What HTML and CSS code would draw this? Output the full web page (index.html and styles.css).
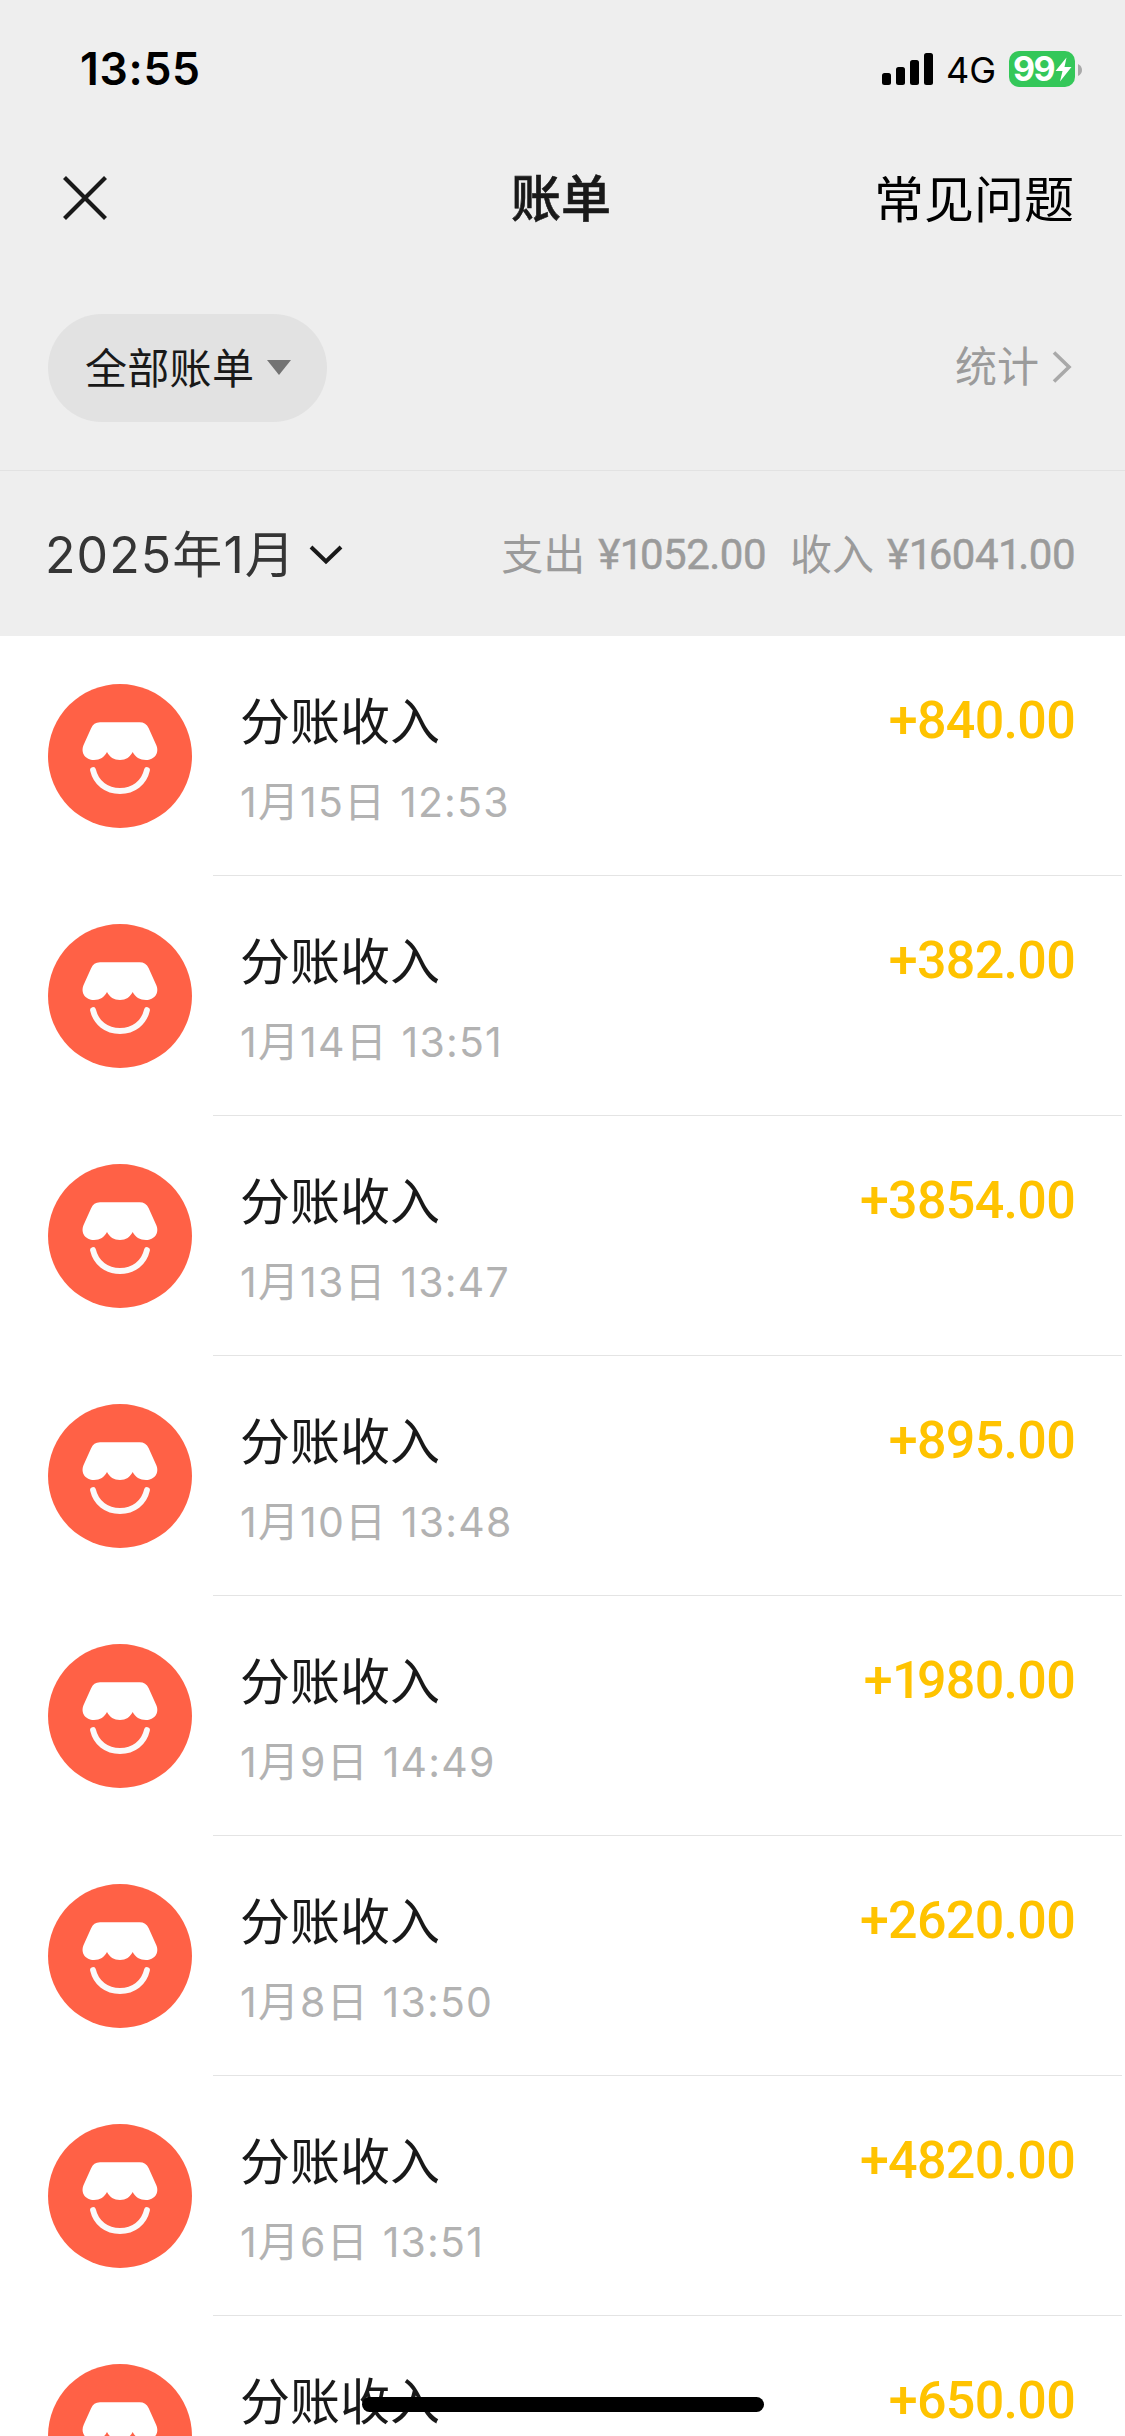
FILE: index.html
```
<!DOCTYPE html>
<html lang="zh-CN">
<head>
<meta charset="utf-8">
<title>账单</title>
<link rel="stylesheet" href="styles.css">
</head>
<body>
<svg class="defs" width="0" height="0" aria-hidden="true">
  <symbol id="shop" viewBox="0 0 144 144">
    <circle cx="72" cy="72" r="72" fill="#ff6146"/>
    <path fill="#fff" d="M52 38.300H91.500Q98 38.300 100.600 44L108 60.500C112 69 106.500 76 98 76C92 76 87 73 84.700 68C82 73 78 76 72 76C66 76 61.500 73 59 68C56.500 73 52 76 46 76C37.500 76 32 69 35.800 60.500L43 44.500Q45.500 38.300 52 38.300Z"/>
    <path fill="none" stroke="#fafafa" stroke-width="5.800" stroke-linecap="round" d="M45 86C48 99 58.500 107 72 107S96 99 99 86"/>
  </symbol>
</svg>
<div class="page">
  <header class="top">
    <div class="status">
      <span class="clock">13:55</span>
      <div class="indicators">
        <svg class="signal" width="52" height="32" viewBox="0 0 52 32"><rect x="0" y="20" width="9" height="12" rx="2.500"/><rect x="14" y="14" width="9" height="18" rx="2.500"/><rect x="28" y="7" width="9" height="25" rx="2.500"/><rect x="42" y="0" width="9" height="32" rx="2.500"/></svg>
        <span class="network">4G</span>
        <div class="battery">
          <span class="level">99</span>
          <svg width="17" height="25" viewBox="0 0 17 25"><path fill="#fff" d="M11.500 0.500L0.500 14H7.500L5 24.500L16.500 10H9.500Z"/></svg>
        </div>
        <svg class="nub" width="4" height="12" viewBox="0 0 4 12"><path fill="#a9a9a9" d="M0 0Q4 2 4 6T0 12Z"/></svg>
      </div>
    </div>
    <nav class="nav">
      <svg class="close" width="44" height="44" viewBox="0 0 44 44"><path fill="none" stroke="#191919" stroke-width="4.200" d="M1.500 1.500L42.500 42.500M42.500 1.500L1.500 42.500"/></svg>
      <h1 class="title">账单</h1>
      <span class="faq">常见问题</span>
    </nav>
    <div class="filters">
      <div class="pill"><span class="scope">全部账单</span><svg width="24" height="15" viewBox="0 0 24 15"><path fill="#737373" d="M0 0H24L12 15Z"/></svg></div>
      <div class="stats"><span>统计</span><svg width="20" height="32" viewBox="0 0 20 32"><path fill="none" stroke="#a9a9a9" stroke-width="3.600" d="M2 1.500L17 16L2 30.500"/></svg></div>
    </div>
    <div class="month">
      <div class="picker"><span>2025年1月</span><svg width="34" height="20" viewBox="0 0 34 20"><path fill="none" stroke="#191919" stroke-width="4" d="M2 2L17 16.500L32 2"/></svg></div>
      <div class="totals"><span class="label">支出</span><span class="sum">¥<span class="one">1</span>052.00</span><span class="label income">收入</span><span class="sum">¥<span class="one">1</span>604<span class="one">1</span>.00</span></div>
    </div>
  </header>
  <main class="list">
    <div class="row"><svg class="avatar"><use href="#shop"/></svg><div class="entry"><div class="info"><span class="name">分账收入</span><span class="date">1月15日 12:53</span></div><span class="amount">+840.00</span></div></div>
    <div class="row"><svg class="avatar"><use href="#shop"/></svg><div class="entry"><div class="info"><span class="name">分账收入</span><span class="date">1月14日 13:51</span></div><span class="amount">+382.00</span></div></div>
    <div class="row"><svg class="avatar"><use href="#shop"/></svg><div class="entry"><div class="info"><span class="name">分账收入</span><span class="date">1月13日 13:47</span></div><span class="amount">+3854.00</span></div></div>
    <div class="row"><svg class="avatar"><use href="#shop"/></svg><div class="entry"><div class="info"><span class="name">分账收入</span><span class="date">1月10日 13:48</span></div><span class="amount">+895.00</span></div></div>
    <div class="row"><svg class="avatar"><use href="#shop"/></svg><div class="entry"><div class="info"><span class="name">分账收入</span><span class="date">1月9日 14:49</span></div><span class="amount">+<span class="one">1</span>980.00</span></div></div>
    <div class="row"><svg class="avatar"><use href="#shop"/></svg><div class="entry"><div class="info"><span class="name">分账收入</span><span class="date">1月8日 13:50</span></div><span class="amount">+2620.00</span></div></div>
    <div class="row"><svg class="avatar"><use href="#shop"/></svg><div class="entry"><div class="info"><span class="name">分账收入</span><span class="date">1月6日 13:51</span></div><span class="amount">+4820.00</span></div></div>
    <div class="row"><svg class="avatar"><use href="#shop"/></svg><div class="entry"><div class="info"><span class="name">分账收入</span></div><span class="amount">+650.00</span></div></div>
  </main>
  <div class="home-bar"></div>
</div>
</body>
</html>
```
FILE: styles.css
```
* { box-sizing: border-box; }
body { margin: 0; background: #fff; }
.defs { position: absolute; }
.page {
  position: relative;
  width: 1125px;
  height: 2436px;
  overflow: hidden;
  font-family: Inter, "Noto Sans CJK SC", sans-serif;
  color: #191919;
}
svg { display: block; flex: none; }
span, h1 { white-space: nowrap; }
.top { height: 636px; background: #eee; }

.status {
  display: flex;
  justify-content: space-between;
  height: 132px;
  padding: 0 43px 0 80px;
  color: #000;
}
.clock { padding-top: 39px; font-size: 44.5px; line-height: 60px; font-weight: 600; letter-spacing: 0.7px; }
.indicators { display: flex; align-items: center; height: 138px; }
.network {
  width: 63px;
  margin: 1px 12px 0 0;
  padding-left: 12px;
  font-size: 36px;
  line-height: 40px;
}
.battery {
  display: flex;
  align-items: center;
  width: 66px;
  height: 36px;
  padding-left: 4px;
  border-radius: 10px;
  background: #34c759;
}
.level { width: 42px; font-size: 34px; line-height: 36px; font-weight: 700; letter-spacing: -1.5px; color: #fff; }
.nub { margin-left: 3px; margin-top: 1px; }

.nav {
  display: grid;
  grid-template-columns: 1fr auto 1fr;
  align-items: center;
  height: 132px;
  padding: 0 51px 0 63px;
  font-size: 50px;
  line-height: 72px;
}
.title { margin: 2px 0 0 -15px; font-size: 50px; font-weight: 500; -webkit-text-stroke: 0.6px currentColor; }
.faq { justify-self: end; margin-top: 3px; color: #000; }

.filters {
  display: flex;
  justify-content: space-between;
  align-items: center;
  height: 207px;
  padding: 1px 53px 0 48px;
  border-bottom: 1px solid #e2e2e2;
  font-size: 42px;
  line-height: 60px;
}
.pill {
  display: flex;
  align-items: center;
  gap: 13px;
  width: 279px;
  height: 108px;
  padding-left: 37px;
  border-radius: 54px;
  background: #e2e2e2;
}
.scope { margin-top: 3px; letter-spacing: 0.3px; }
.stats { display: flex; align-items: center; gap: 13px; margin-bottom: 2px; color: #9b9b9b; }

.month { display: flex; justify-content: space-between; align-items: center; height: 165px; padding: 2px 50px 0 45px; }
.picker { display: flex; align-items: center; gap: 13px; font-size: 50px; line-height: 70px; letter-spacing: 1.1px; color: #353535; }
.totals { display: flex; align-items: center; font-size: 42px; line-height: 60px; color: #9b9b9b; }
.sum { margin-left: 13px; font-family: Roboto, sans-serif; letter-spacing: -0.5px; -webkit-text-stroke: 0.5px currentColor; }
.sum .one { letter-spacing: -3.5px; }
.income { margin-left: 24px; }

.row { display: flex; height: 240px; padding-left: 48px; }
.avatar { width: 144px; height: 144px; margin-top: 48px; }
.entry {
  display: flex;
  justify-content: space-between;
  align-items: flex-start;
  width: 909px;
  margin-left: 21px;
  padding: 50px 47px 0 27px;
  border-bottom: 1px solid #e4e4e4;
}
.info { display: flex; flex-direction: column; }
.name { font-size: 50px; line-height: 72px; }
.date { margin-top: 14px; font-size: 41px; line-height: 60px; letter-spacing: 1.2px; word-spacing: 1px; color: #b2b2b2; }
.amount { font-family: Roboto, sans-serif; font-size: 52px; line-height: 69px; font-weight: 500; letter-spacing: -0.7px; color: #ffc300; }
.amount .one { letter-spacing: -4.5px; }

.home-bar {
  position: absolute;
  left: 362px;
  top: 2397px;
  width: 402px;
  height: 15px;
  border-radius: 8px;
  background: #000;
}
```
